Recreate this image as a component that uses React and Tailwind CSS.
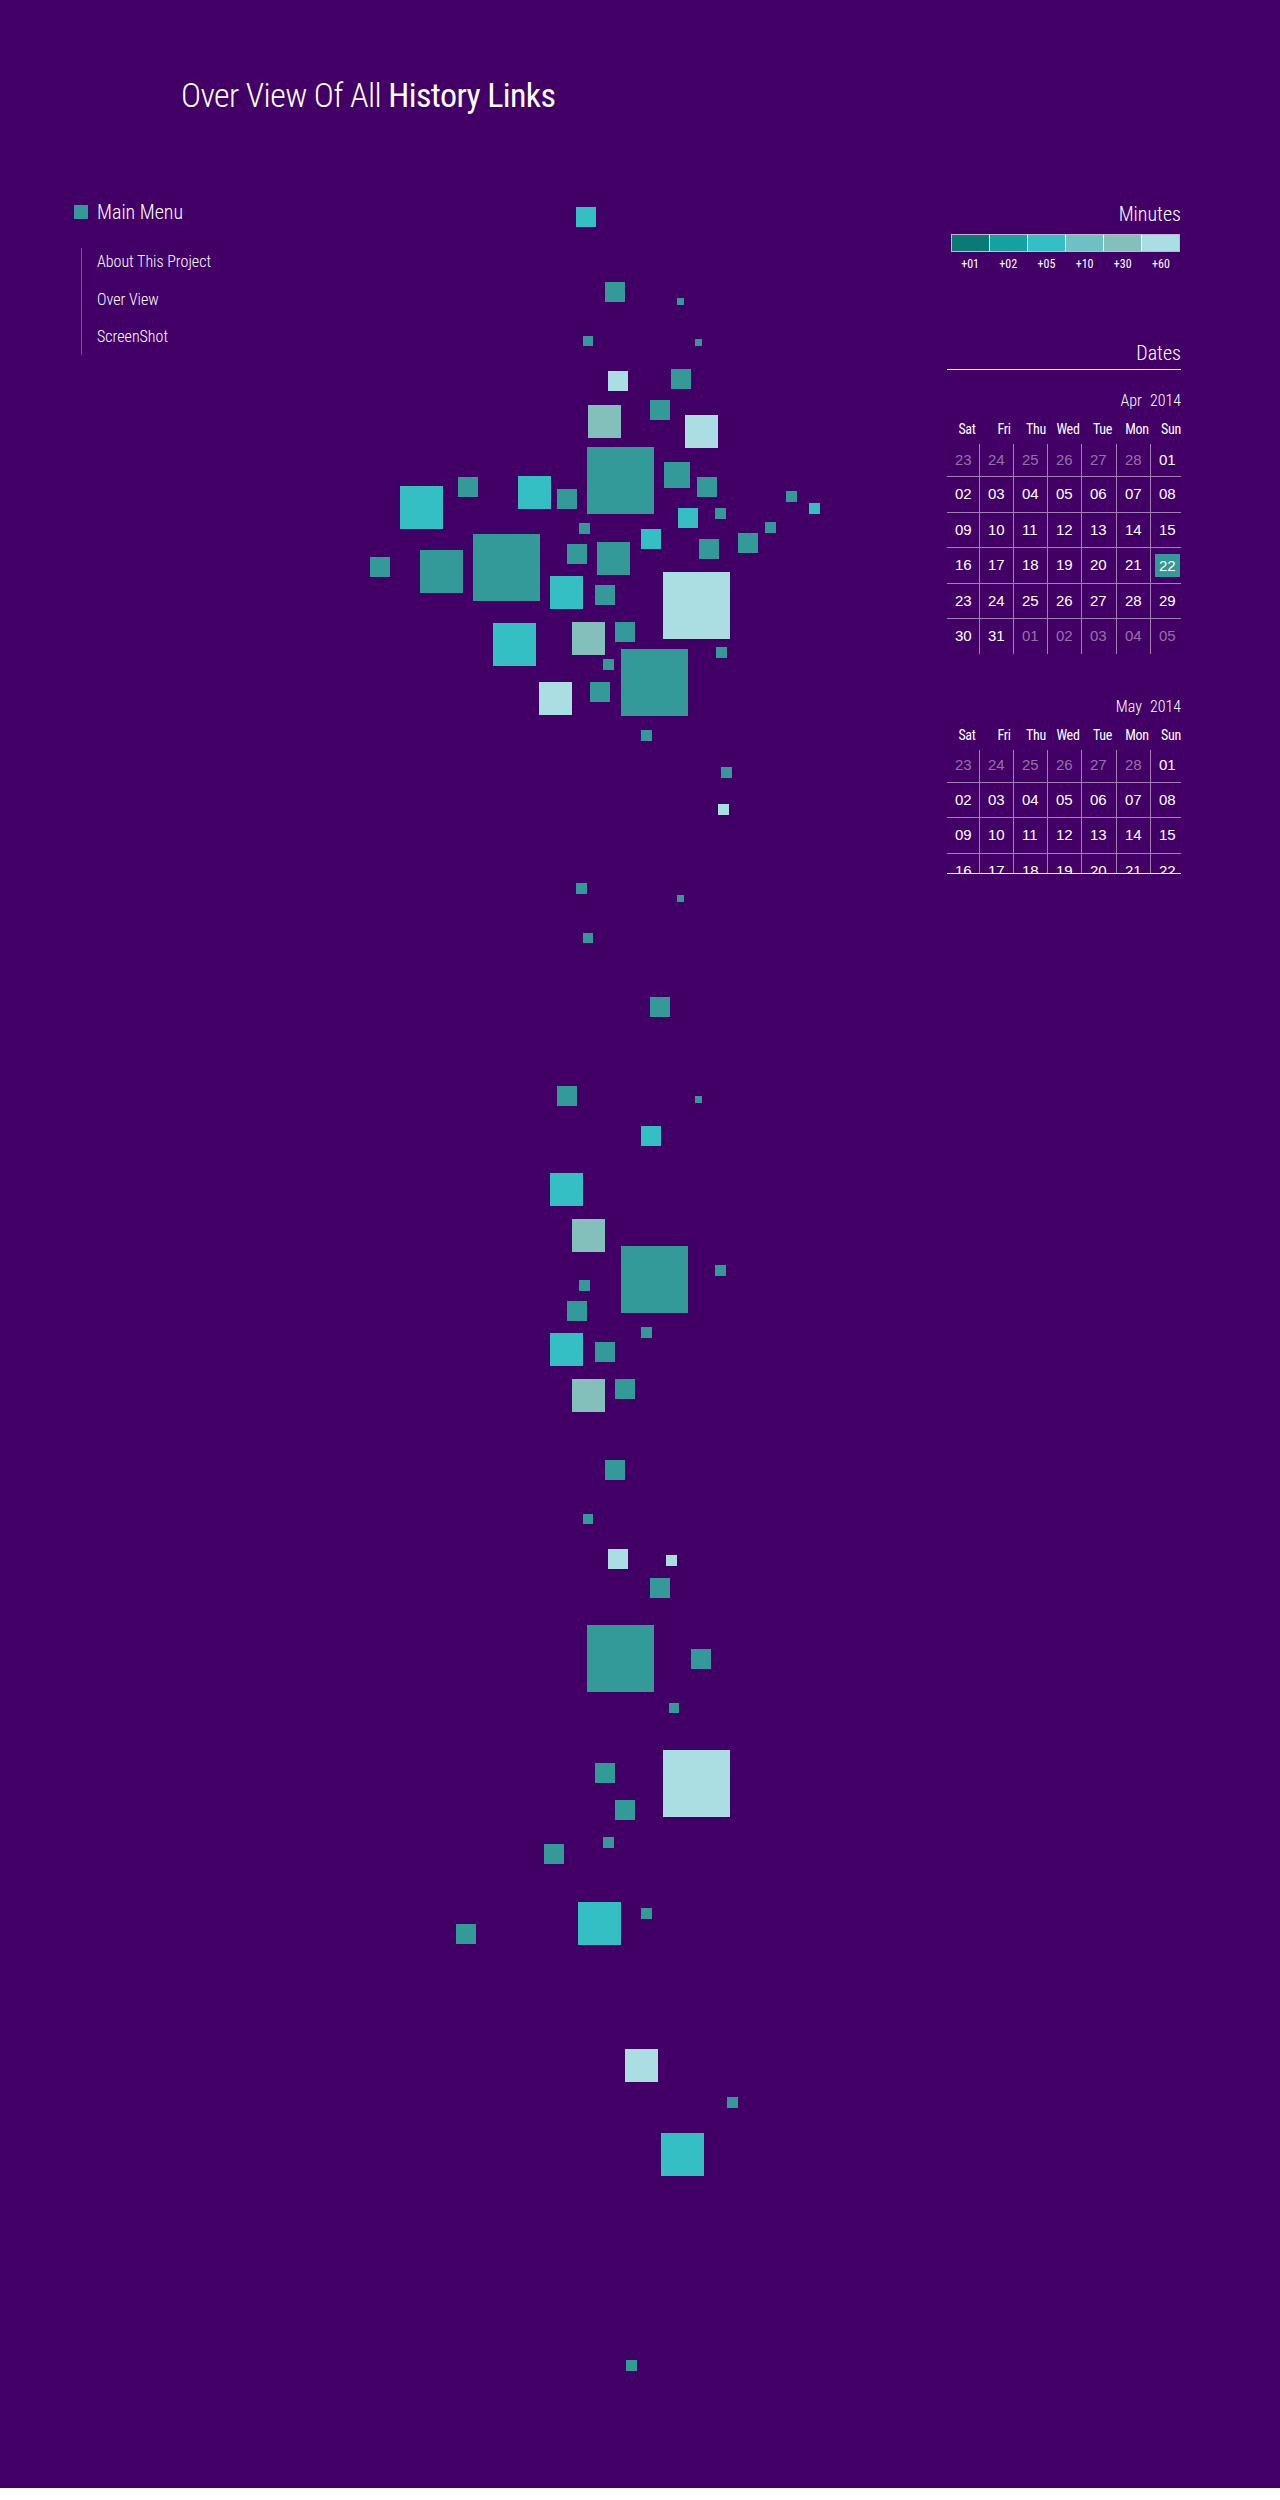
import React from 'react';

const COLORS = {
  T: 'bg-[#339999]',
  C: 'bg-[#33bfc4]',
  S: 'bg-[#84c0bb]',
  L: 'bg-[#aadee3]',
};

// [x, y, size, colour] in page coordinates
const SQUARES = [
  [576, 207, 20, 'C'], [605, 282, 20, 'T'], [677, 298, 7, 'T'], [583, 336, 10, 'T'],
  [695, 339, 7, 'T'], [608, 371, 20, 'L'], [671, 369, 20, 'T'], [588, 405, 33, 'S'],
  [650, 400, 20, 'T'], [685, 415, 33, 'L'], [587, 447, 67, 'T'], [664, 462, 26, 'T'],
  [697, 477, 20, 'T'], [400, 486, 43, 'C'], [458, 477, 20, 'T'], [518, 476, 33, 'C'],
  [557, 489, 20, 'T'], [786, 491, 11, 'T'], [809, 503, 11, 'C'], [678, 508, 20, 'C'],
  [715, 508, 11, 'T'], [579, 523, 11, 'T'], [765, 522, 11, 'T'], [641, 529, 20, 'C'],
  [738, 533, 20, 'T'], [370, 557, 20, 'T'], [420, 550, 43, 'T'], [473, 534, 67, 'T'],
  [567, 544, 20, 'T'], [597, 542, 33, 'T'], [699, 539, 20, 'T'], [663, 572, 67, 'L'],
  [550, 576, 33, 'C'], [595, 585, 20, 'T'], [493, 623, 43, 'C'], [572, 622, 33, 'S'],
  [615, 622, 20, 'T'], [716, 647, 11, 'T'], [603, 659, 11, 'T'], [621, 649, 67, 'T'],
  [539, 682, 33, 'L'], [590, 682, 20, 'T'], [641, 730, 11, 'T'], [721, 767, 11, 'T'],
  [718, 804, 11, 'L'], [576, 883, 11, 'T'], [677, 895, 7, 'T'], [583, 933, 10, 'T'],
  [650, 997, 20, 'T'], [557, 1086, 20, 'T'], [695, 1096, 7, 'T'], [641, 1126, 20, 'C'],
  [550, 1173, 33, 'C'], [572, 1219, 33, 'S'], [621, 1246, 67, 'T'], [715, 1265, 11, 'T'],
  [579, 1280, 11, 'T'], [567, 1301, 20, 'T'], [641, 1327, 11, 'T'], [550, 1333, 33, 'C'],
  [595, 1342, 20, 'T'], [572, 1379, 33, 'S'], [615, 1379, 20, 'T'], [605, 1460, 20, 'T'],
  [583, 1514, 10, 'T'], [608, 1549, 20, 'L'], [666, 1555, 11, 'L'], [650, 1578, 20, 'T'],
  [587, 1625, 67, 'T'], [691, 1649, 20, 'T'], [669, 1703, 10, 'T'], [663, 1750, 67, 'L'],
  [595, 1763, 20, 'T'], [615, 1800, 20, 'T'], [603, 1837, 11, 'T'], [544, 1844, 20, 'T'],
  [578, 1902, 43, 'C'], [641, 1908, 11, 'T'], [456, 1924, 20, 'T'], [625, 2049, 33, 'L'],
  [727, 2097, 11, 'T'], [661, 2133, 43, 'C'], [626, 2360, 11, 'T'],
];

const CANVAS_X = 340;
const CANVAS_Y = 200;

const LEGEND = [
  ['bg-[#0a7a75]', '+01'],
  ['bg-[#16a0a0]', '+02'],
  ['bg-[#33bfc4]', '+05'],
  ['bg-[#6ec1c2]', '+10'],
  ['bg-[#84c0bb]', '+30'],
  ['bg-[#aadee3]', '+60'],
];

const DAYS = ['Sat', 'Fri', 'Thu', 'Wed', 'Tue', 'Mon', 'Sun'];

// g = other month, h = today
const weeks = (today) => [
  [['23', 'g'], ['24', 'g'], ['25', 'g'], ['26', 'g'], ['27', 'g'], ['28', 'g'], ['01']],
  [['02'], ['03'], ['04'], ['05'], ['06'], ['07'], ['08']],
  [['09'], ['10'], ['11'], ['12'], ['13'], ['14'], ['15']],
  [['16'], ['17'], ['18'], ['19'], ['20'], ['21'], ['22', today ? 'h' : undefined]],
  [['23'], ['24'], ['25'], ['26'], ['27'], ['28'], ['29']],
  [['30'], ['31'], ['01', 'g'], ['02', 'g'], ['03', 'g'], ['04', 'g'], ['05', 'g']],
];

const condensed = "font-['Roboto_Condensed','Roboto',sans-serif] [font-stretch:condensed]";

const Month = ({ month, year, today }) => (
  <div>
    <div className={`flex justify-end gap-2 text-[16px] leading-[20px] font-light text-white ${condensed}`}>
      <span>{month}</span>
      <span>{year}</span>
    </div>
    <div className={`mt-[10px] grid grid-cols-[40px_34px_30px_34px_35px_34px_27px] text-[14px] leading-[16px] tracking-[-0.3px] text-white ${condensed}`}>
      {DAYS.map((d) => (
        <span key={d} className={d === 'Sun' ? 'text-right' : 'text-center'}>{d}</span>
      ))}
    </div>
    <div className="mt-[7px] font-['Liberation_Sans',Arial,sans-serif] text-[15px]">
      {weeks(today).map((week, wi) => (
        <div
          key={wi}
          className={`grid grid-cols-[32px_34px_34px_34px_35px_34px_31px] ${wi === 0 ? 'h-[32px]' : 'h-[35.5px] border-t border-white/50'}`}
        >
          {week.map(([n, kind], di) => (
            <div
              key={di}
              className={`flex items-center pl-2 ${di > 0 ? 'border-l border-white/50' : ''} ${kind === 'g' ? 'text-white/45' : 'text-white'}`}
            >
              {kind === 'h' ? (
                <span className="-ml-1 px-1 leading-[23px] bg-[#339999]">{n}</span>
              ) : (
                n
              )}
            </div>
          ))}
        </div>
      ))}
    </div>
  </div>
);

export default function App() {
  return (
    <div className="w-[1280px] bg-[#420066] text-white">
      <header className="pt-[75px] pl-[181px]">
        <h1 className={`text-[34px] leading-[40px] font-light tracking-[-0.6px] ${condensed}`}>
          Over View Of All <span className="font-normal">History Links</span>
        </h1>
      </header>

      <div className="mt-[85px] flex">
        <aside className={`w-[340px] pl-[74px] ${condensed}`}>
          <div className="flex items-center gap-[9px] h-[24px]">
            <span className="w-[14px] h-[14px] bg-[#339999]" />
            <span className="text-[20px] leading-[24px] font-light">Main Menu</span>
          </div>
          <ul className="mt-[24px] ml-[7px] pl-[15px] pt-[1px] pb-[5px] border-l border-white/30 flex flex-col gap-[11.5px] text-[16px] font-light">
            <li className="h-[26px] leading-[26px]">About This Project</li>
            <li className="h-[26px] leading-[26px]">Over View</li>
            <li className="h-[26px] leading-[26px]">ScreenShot</li>
          </ul>
        </aside>

        <div className="relative w-[500px] h-[2288px]">
          {SQUARES.map(([x, y, s, c], i) => (
            <span
              key={i}
              className={`absolute ${COLORS[c]}`}
              style={{ left: x - CANVAS_X, top: y - CANVAS_Y, width: s, height: s }}
            />
          ))}
        </div>

        <aside className="ml-[107px] w-[234px]">
          <div className={`pt-[2px] text-right text-[20px] leading-[24px] font-light ${condensed}`}>Minutes</div>
          <div className="mt-[8px] ml-[4px] w-[229px] h-[18px] flex border border-white/70">
            {LEGEND.map(([bg], i) => (
              <span key={i} className={`flex-1 ${bg} ${i > 0 ? 'border-l border-white' : ''}`} />
            ))}
          </div>
          <div className={`mt-[4px] ml-[4px] w-[229px] flex text-[12px] leading-[16px] ${condensed}`}>
            {LEGEND.map(([, label]) => (
              <span key={label} className="flex-1 text-center">{label}</span>
            ))}
          </div>

          <div className={`mt-[69px] pb-[4px] border-b border-white text-right text-[20px] leading-[24px] font-light ${condensed}`}>
            Dates
          </div>
          <div className="h-[504px] overflow-hidden border-b border-white pt-[21px]">
            <Month month="Apr" year="2014" today />
            <div className="mt-[43px]">
              <Month month="May" year="2014" />
            </div>
          </div>
        </aside>
      </div>
    </div>
  );
}
